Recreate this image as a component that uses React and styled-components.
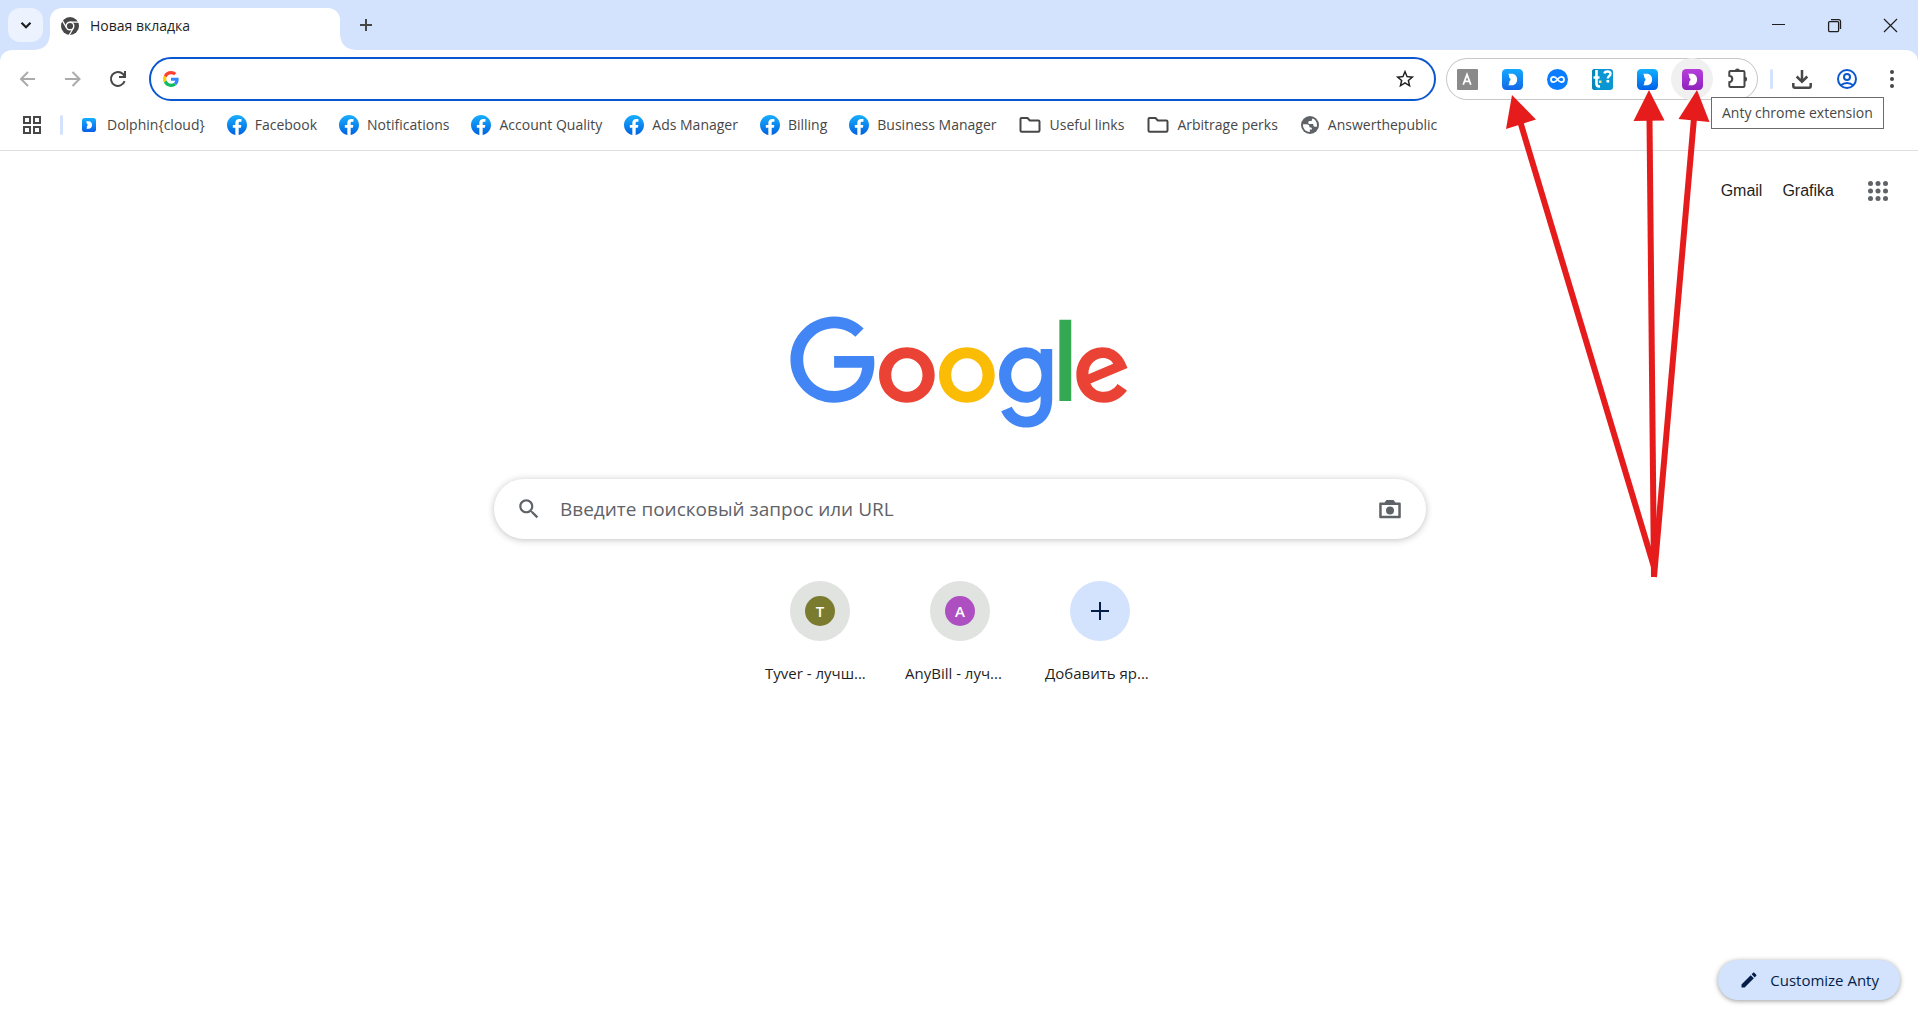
import React from "react";
import styled, { createGlobalStyle } from "styled-components";

const ui = `"Open Sans", "Noto Sans", sans-serif`;

const GlobalStyle = createGlobalStyle`
  *, *::before, *::after { box-sizing: border-box; }
  body { margin: 0; background: #fff; font-family: ${ui}; color: #1f1f1f; }
  button { border: 0; padding: 0; background: none; font: inherit; color: inherit; }
  a { color: inherit; text-decoration: none; }
  svg { display: block; flex: none; overflow: visible; }
`;

const Window = styled.div`
  position: relative;
  display: flex;
  flex-direction: column;
  min-height: 100vh;
  overflow: hidden;
`;

/* ---------- tab strip ---------- */

const TabStrip = styled.div`
  display: flex;
  height: 50px;
  padding: 8px 0 0 8px;
  background: #d3e3fd;
`;

const TabSearch = styled.button`
  display: grid;
  place-items: center;
  width: 35px;
  height: 34px;
  border-radius: 12px;
  background: #ecf2fe;
`;

const Tab = styled.div`
  position: relative;
  display: flex;
  align-items: center;
  gap: 11px;
  width: 290px;
  height: 42px;
  margin-left: 7px;
  padding: 0 11px 7px;
  border-radius: 12px 12px 0 0;
  background: #fff;
  font-size: 14px;
  line-height: 20px;

  &::before,
  &::after {
    content: "";
    position: absolute;
    bottom: 0;
    width: 14px;
    height: 14px;
  }
  &::before {
    right: 100%;
    background: radial-gradient(circle at 0 0, transparent 13px, #fff 14px);
  }
  &::after {
    left: 100%;
    background: radial-gradient(circle at 100% 0, transparent 13px, #fff 14px);
  }
`;

const NewTab = styled.button`
  display: grid;
  place-items: center;
  width: 34px;
  height: 34px;
  margin-left: 9px;
`;

const WindowControls = styled.div`
  display: flex;
  height: 34px;
  margin-left: auto;
`;

const WindowButton = styled.button`
  display: grid;
  place-items: center;
  width: 56px;
  padding-top: ${(p) => (p.$low ? "0" : "0")};
`;

/* ---------- toolbar ---------- */

const Chrome = styled.header`
  background: #d3e3fd;
`;

const Bars = styled.div`
  padding: 7px 5px 1px;
  border-bottom: 1px solid #dedfe0;
  border-radius: 12px 12px 0 0;
  background: #fff;
`;

const Toolbar = styled.div`
  display: flex;
  align-items: center;
`;

const NavButton = styled.button`
  display: grid;
  place-items: center;
  width: 45px;
  height: 42px;
  color: ${(p) => (p.$dim ? "#ababab" : "#474747")};
`;

const Omnibox = styled.label`
  display: flex;
  flex: 1;
  align-items: center;
  gap: 12px;
  min-width: 0;
  height: 44px;
  margin: 0 10px 0 9px;
  padding: 0 18px 0 12px;
  border: 2px solid #0b57d0;
  border-radius: 22px;
`;

const BareInput = styled.input`
  flex: 1;
  min-width: 0;
  padding: 0;
  border: 0;
  outline: 0;
  background: none;
  color: #1f1f1f;
  font-family: ${ui};
  font-size: ${(p) => (p.$large ? "19px" : "14px")};
  line-height: 26px;

  &::placeholder {
    color: #5f6368;
    opacity: 1;
  }
`;

const Extensions = styled.div`
  display: flex;
  gap: 3px;
  border-radius: 21px;
  box-shadow: inset 0 0 0 1px #c7c7c7;
`;

const RoundButton = styled.button`
  position: relative;
  display: grid;
  place-items: center;
  width: 42px;
  height: 42px;
  border-radius: 50%;
  background: ${(p) => (p.$hovered ? "#f0f0f0" : "none")};
  color: ${(p) => p.$color || "#474747"};
`;

const Tooltip = styled.span`
  position: absolute;
  top: 39px;
  left: 40px;
  z-index: 2;
  padding: 5px 10px;
  border: 1px solid #6b6b6b;
  background: #fff;
  color: #474747;
  font-size: 14px;
  line-height: 20px;
  white-space: nowrap;
`;

const Divider = styled.span`
  width: 3px;
  height: 20px;
  margin: ${(p) => p.$margin};
  border-radius: 2px;
  background: #d3e3fd;
`;

const ToolbarEnd = styled.div`
  display: flex;
  gap: 3px;
`;

/* ---------- bookmarks ---------- */

const Bookmarks = styled.nav`
  display: flex;
  align-items: center;
  height: 48px;
  padding-left: 17px;
`;

const BookmarkList = styled.div`
  display: flex;
  gap: 22px;
`;

const Bookmark = styled.a`
  display: flex;
  align-items: center;
  gap: 8px;
  color: #474747;
  font-size: 14px;
  line-height: 20px;
  white-space: nowrap;
`;

const BookmarkIcon = styled.span`
  display: grid;
  place-items: center;
  width: ${(p) => (p.$wide ? "23px" : "20px")};
  height: 20px;
`;

/* ---------- new tab page ---------- */

const Page = styled.main`
  display: flex;
  flex: 1;
  flex-direction: column;
  align-items: center;
  padding-left: 2px;
`;

const TopLinks = styled.nav`
  display: flex;
  align-items: center;
  align-self: stretch;
  justify-content: flex-end;
  gap: 20px;
  padding: 20px 20px 0;
  font-family: "Liberation Sans", Arial, sans-serif;
  font-size: 16px;
  line-height: 20px;
`;

const AppsButton = styled.button`
  display: grid;
  place-items: center;
  width: 40px;
  height: 40px;
  margin-left: 4px;
  color: #5f6368;
`;

const Logo = styled.svg`
  width: 340px;
  height: 115px;
  margin-top: 105px;
`;

const SearchBox = styled.label`
  display: flex;
  align-items: center;
  gap: 18px;
  width: 932px;
  max-width: calc(100% - 40px);
  height: 60px;
  margin-top: 48px;
  padding: 0 25px 0 22px;
  border-radius: 30px;
  background: #fff;
  box-shadow: 0 1px 7px rgba(32, 33, 36, 0.28);
  color: #5f6368;
`;

const Tiles = styled.div`
  display: flex;
  margin-top: 42px;
`;

const Tile = styled.a`
  display: flex;
  flex-direction: column;
  align-items: center;
  gap: 22px;
  width: 140px;
`;

const TileCircle = styled.span`
  display: grid;
  place-items: center;
  width: 60px;
  height: 60px;
  border-radius: 50%;
  background: ${(p) => (p.$add ? "#d3e3fd" : "#e1e3e1")};
`;

const Monogram = styled.span`
  display: grid;
  place-items: center;
  width: 30px;
  height: 30px;
  border-radius: 50%;
  background: ${(p) => p.$color};
  color: #fff;
  font-size: 15px;
  font-weight: 600;
  line-height: 20px;
`;

const TileLabel = styled.span`
  width: 110px;
  font-size: 15px;
  line-height: 20px;
  white-space: nowrap;
`;

const Footer = styled.footer`
  display: flex;
  justify-content: flex-end;
  padding: 0 18px 10px;
`;

const Customize = styled.button`
  display: flex;
  align-items: center;
  gap: 11px;
  height: 40px;
  padding: 0 21px;
  border-radius: 20px;
  background: #d3e3fd;
  box-shadow: 0 1px 5px rgba(0, 0, 0, 0.4);
  color: #041e49;
  font-size: 15px;
  line-height: 20px;
`;

const Annotation = styled.svg`
  position: absolute;
  top: 0;
  right: 0;
  z-index: 3;
  pointer-events: none;
`;

/* ---------- icons ---------- */

const Stroke = ({ size, width = 2, children, ...rest }) => (
  <svg width={size} height={size} viewBox={`0 0 ${size} ${size}`} fill="none" stroke="currentColor" strokeWidth={width} {...rest}>
    {children}
  </svg>
);

const Glyph = ({ size, d }) => (
  <svg width={size} height={size} viewBox="0 0 24 24" fill="currentColor">
    <path d={d} />
  </svg>
);

const STAR = "M22 9.24l-7.19-.62L12 2 9.19 8.63 2 9.24l5.46 4.73L5.82 21 12 17.27 18.18 21l-1.63-7.03L22 9.24zM12 15.4l-3.76 2.27 1-4.28-3.32-2.88 4.38-.38L12 6.1l1.71 4.04 4.38.38-3.32 2.88 1 4.28L12 15.4z";
const SEARCH = "M15.5 14h-.79l-.28-.27C15.41 12.59 16 11.11 16 9.5 16 5.91 13.09 3 9.5 3S3 5.91 3 9.5 5.91 16 9.5 16c1.61 0 3.09-.59 4.23-1.57l.27.28v.79l5 4.99L20.49 19l-4.99-5zm-6 0C7.01 14 5 11.99 5 9.5S7.01 5 9.5 5 14 7.01 14 9.5 11.99 14 9.5 14z";
const PENCIL = "M3 17.25V21h3.75L17.81 9.94l-3.75-3.75L3 17.25zM20.71 7.04c.39-.39.39-1.02 0-1.41l-2.34-2.34c-.39-.39-1.02-.39-1.41 0l-1.83 1.83 3.75 3.75 1.83-1.83z";

const ChromeIcon = () => (
  <svg width="18" height="18" viewBox="0 0 18 18">
    <circle cx="9" cy="9" r="9" fill="#474747" />
    <circle cx="9" cy="9" r="4.5" fill="#fff" />
    {[0, 120, 240].map((a) => (
      <path key={a} d="M9 5.1H18" stroke="#fff" strokeWidth="1.3" transform={`rotate(${a} 9 9)`} />
    ))}
    <circle cx="9" cy="9" r="3.1" fill="#474747" />
  </svg>
);

const GIcon = () => (
  <svg width="16" height="16" viewBox="0 0 48 48">
    <path fill="#ff4131" d="M24 9.5c3.54 0 6.71 1.22 9.21 3.6l6.85-6.85C35.9 2.38 30.47 0 24 0 14.62 0 6.51 5.38 2.56 13.22l7.98 6.19C12.43 13.72 17.74 9.5 24 9.5z" />
    <path fill="#3186ff" d="M46.98 24.55c0-1.57-.15-3.09-.38-4.55H24v9.02h12.94c-.58 2.96-2.26 5.48-4.78 7.18l7.73 6c4.51-4.18 7.09-10.36 7.09-17.65z" />
    <path fill="#ffcc00" d="M10.53 28.59c-.48-1.45-.76-2.99-.76-4.59s.27-3.14.76-4.59l-7.98-6.19C.92 16.46 0 20.12 0 24c0 3.88.92 7.54 2.56 10.78l7.97-6.19z" />
    <path fill="#0ebc5f" d="M24 48c6.48 0 11.93-2.13 15.89-5.81l-7.73-6c-2.15 1.45-4.92 2.3-8.16 2.3-6.26 0-11.57-4.22-13.47-9.91l-7.98 6.19C6.51 42.62 14.62 48 24 48z" />
  </svg>
);

const FacebookIcon = () => (
  <svg width="20" height="20" viewBox="0 0 36 36">
    <defs>
      <linearGradient id="fb" x1="0" y1="0" x2="0" y2="1">
        <stop offset="0" stopColor="#19afff" />
        <stop offset="1" stopColor="#0062e0" />
      </linearGradient>
    </defs>
    <path fill="url(#fb)" d="M15 35.8C6.5 34.3 0 26.9 0 18 0 8.1 8.1 0 18 0s18 8.1 18 18c0 8.9-6.5 16.3-15 17.8l-1-.8h-4l-1 .8z" />
    <path fill="#fff" d="M25 23l.8-5H21v-3.5c0-1.4.5-2.5 2.7-2.5H26V7.4c-1.3-.2-2.7-.4-4-.4-4.1 0-7 2.5-7 7v4h-4.5v5H15v12.7c1 .2 2 .3 3 .3s2-.1 3-.3V23h4z" />
  </svg>
);

const DolphinIcon = ({ size = 21, id, from, to }) => (
  <svg width={size} height={size} viewBox="0 0 20 20">
    <defs>
      <linearGradient id={id} x1="0" y1="0" x2="0" y2="1">
        <stop offset="0" stopColor={from} />
        <stop offset="1" stopColor={to} />
      </linearGradient>
    </defs>
    <rect width="20" height="20" rx="4" fill={`url(#${id})`} />
    <path fill="#fff" d="M5.800 4.500h3.600c3 0 5 2.300 5 5.500s-2 5.500-5 5.500H6c1-1 1.200-2.200.8-3.500.8-.4 1.300-1.200 1.300-2S7.600 8.400 6.800 8c.2-1.300-.1-2.500-1-3.500z" />
  </svg>
);

const GrayAIcon = () => (
  <svg width="21" height="21" viewBox="0 0 21 21">
    <rect width="21" height="21" rx="1" fill="#8a8a8a" />
    <path d="M6.200 15.800 10 5.500 13.800 15.800M7.600 12.300h5" fill="none" stroke="#fff" strokeWidth="1.800" />
  </svg>
);

const InfinityIcon = () => (
  <svg width="21" height="21" viewBox="0 0 20 20">
    <circle cx="10" cy="10" r="10" fill="#0a7cff" />
    <path d="M10 10C8.500 8 7.500 7.500 6.300 7.500a2.500 2.500 0 0 0 0 5C7.500 12.500 8.500 12 10 10s2.500-2.500 3.700-2.500a2.500 2.500 0 0 1 0 5C12.500 12.500 11.500 12 10 10z" fill="none" stroke="#fff" strokeWidth="1.700" />
  </svg>
);

const HelperIcon = () => (
  <svg width="21" height="21" viewBox="0 0 21 21">
    <rect width="21" height="21" rx="3" fill="#0a95d3" />
    <path d="M0 3a3 3 0 0 1 3-3h1v21H3a3 3 0 0 1-3-3z" fill="#0b86b8" />
    <path d="M4.500 1v14c0 1.700 1 2.600 3.500 2.400M1.500 8.500h6" fill="none" stroke="#fff" strokeWidth="2.600" />
    <path d="M12.500 4.500c.3-2.700 6-2.800 6 .3 0 2.300-2.700 2.200-2.700 4.700" fill="none" stroke="#fff" strokeWidth="2.400" />
    <rect x="14.500" y="11" width="2.700" height="2.500" fill="#fff" />
    <rect x="7" y="11.500" width="2.500" height="2.500" fill="#ffe28a" />
  </svg>
);

const PuzzleIcon = () => (
  <svg width="22" height="22" viewBox="0 0 22 22" fill="none" stroke="currentColor" strokeWidth="2">
    <path d="M4.500 3h12.800c.8 0 1.200.4 1.200 1.200v13.600c0 .8-.4 1.200-1.200 1.200H4.500c-.8 0-1.200-.4-1.200-1.200v-3.600c1.800-.3 3-1.500 3-3.200s-1.200-2.900-3-3.200V4.200C3.300 3.400 3.700 3 4.500 3z" />
    <path d="M8.800 3a2.600 2.600 0 0 1 5.200 0zM18.500 8.400a2.600 2.600 0 0 1 0 5.200z" fill="currentColor" stroke="none" />
  </svg>
);

const DownloadIcon = () => (
  <Stroke size={20} width={2.5}>
    <path d="M10 1v11M4.700 7.500 10 12.800l5.300-5.300M1.300 14v3c0 1 .6 1.700 1.700 1.700h14c1.100 0 1.700-.7 1.700-1.700v-3" />
  </Stroke>
);

const AccountIcon = () => (
  <Stroke size={20}>
    <circle cx="10" cy="10" r="9" />
    <circle cx="10" cy="8" r="3" />
    <path d="M4 16.200c3.300-3 8.700-3 12 0" />
  </Stroke>
);

const FolderIcon = () => (
  <Stroke size={20}>
    <path d="M1.500 3h6l2.300 2.500h8.500c.7 0 1.200.4 1.200 1.100v9c0 .8-.5 1.200-1.200 1.200H1.700C1 16.800.5 16.400.5 15.600V4.100C.5 3.400.9 3 1.500 3z" />
  </Stroke>
);

const GlobeIcon = () => (
  <svg width="18" height="18" viewBox="0 0 18 18">
    <circle cx="9" cy="9" r="9" fill="#5f6368" />
    <path fill="#fff" d="M2 8.200h3.500c1.900 0 2.900.9 2.900 2.300 0 .7.500 1 1.200 1 .9 0 1.300.5 1.300 1.300v.7H8.800v2.400C5 16 2 12.900 2 9z" />
    <path fill="#fff" d="M11.800 2.600C14.300 3.600 16 6.100 16 9c0 .6-.1 1.200-.2 1.700h-1.900c-1 0-1.600-.6-1.600-1.600V8H8.800c-1 0-1.600-.6-1.600-1.500S7.800 5 8.800 5h1.100c.7 0 1-.4 1-1 0-.7.300-1.100.900-1.400z" />
  </svg>
);

const CameraIcon = () => (
  <svg width="22" height="20" viewBox="0 0 22 20" fill="#5f6368">
    <path fillRule="evenodd" d="M7.500 1h7l2 2.500h4c.8 0 1.300.5 1.300 1.300V18c0 .8-.5 1.300-1.300 1.300h-19C.7 19.300.2 18.800.2 18V4.800c0-.8.5-1.300 1.300-1.300h4zM2.700 6v10.800h16.600V6z" />
    <circle cx="11" cy="11.500" r="4" />
  </svg>
);

const bookmarks = [
  { label: "Dolphin{cloud}", icon: <DolphinIcon size={14} id="dc" from="#12b0ff" to="#0a5fea" /> },
  { label: "Facebook", icon: <FacebookIcon /> },
  { label: "Notifications", icon: <FacebookIcon /> },
  { label: "Account Quality", icon: <FacebookIcon /> },
  { label: "Ads Manager", icon: <FacebookIcon /> },
  { label: "Billing", icon: <FacebookIcon /> },
  { label: "Business Manager", icon: <FacebookIcon /> },
  { label: "Useful links", icon: <FolderIcon />, wide: true },
  { label: "Arbitrage perks", icon: <FolderIcon />, wide: true },
  { label: "Answerthepublic", icon: <GlobeIcon /> },
];

const arrows = [
  { head: "1512,95 1536,119.5 1506,129", line: [1520, 121, 1654, 567] },
  { head: "1649,90 1664.500,120.500 1633.500,121", line: [1649.5, 119, 1654, 577] },
  { head: "1697,90 1709.500,122 1678.500,119", line: [1694, 118, 1654, 577] },
];

export default function App() {
  return (
    <Window>
      <GlobalStyle />
      <Chrome>
        <TabStrip>
          <TabSearch aria-label="Search tabs">
            <Stroke size={12} width={2.2}>
              <path d="M1.500 3.800 6 8.300l4.500-4.500" />
            </Stroke>
          </TabSearch>
          <Tab>
            <ChromeIcon />
            Новая вкладка
          </Tab>
          <NewTab aria-label="New tab">
            <Stroke size={14} color="#474747">
              <path d="M7 1v12M1 7h12" />
            </Stroke>
          </NewTab>
          <WindowControls>
            <WindowButton aria-label="Minimize">
              <Stroke size={13} width={1}>
                <path d="M0 5.500h13" />
              </Stroke>
            </WindowButton>
            <WindowButton aria-label="Restore">
              <Stroke size={13} width={1.3}>
                <rect x=".6" y="2.600" width="10" height="10" rx="1" />
                <path d="M3 .6h7.500c1.200 0 2 .8 2 2V10" />
              </Stroke>
            </WindowButton>
            <WindowButton aria-label="Close">
              <Stroke size={13} width={1.2}>
                <path d="M0 0l13 13M13 0 0 13" />
              </Stroke>
            </WindowButton>
          </WindowControls>
        </TabStrip>

        <Bars>
          <Toolbar>
            <NavButton $dim aria-label="Back">
              <Stroke size={16}>
                <path d="M15 8H1.500M8 1 1 8l7 7" />
              </Stroke>
            </NavButton>
            <NavButton $dim aria-label="Forward">
              <Stroke size={16}>
                <path d="M0 8h14M7.500 1l7 7-7 7" />
              </Stroke>
            </NavButton>
            <NavButton aria-label="Reload">
              <Stroke size={16}>
                <path d="M14.600 10.200A7 7 0 1 1 13 3l1.500 2.300M15 0v6H9" />
              </Stroke>
            </NavButton>
            <Omnibox>
              <GIcon />
              <BareInput aria-label="Address bar" />
              <Glyph size={22} d={STAR} />
            </Omnibox>
            <Extensions>
              <RoundButton aria-label="Extension A"><GrayAIcon /></RoundButton>
              <RoundButton aria-label="Dolphin"><DolphinIcon id="d1" from="#12a8ff" to="#1468e6" /></RoundButton>
              <RoundButton aria-label="Infinity"><InfinityIcon /></RoundButton>
              <RoundButton aria-label="Helper"><HelperIcon /></RoundButton>
              <RoundButton aria-label="Dolphin"><DolphinIcon id="d2" from="#12b0ff" to="#0060e8" /></RoundButton>
              <RoundButton $hovered aria-label="Anty chrome extension">
                <DolphinIcon id="d3" from="#b73fdc" to="#8f22bd" />
                <Tooltip>Anty chrome extension</Tooltip>
              </RoundButton>
              <RoundButton aria-label="Extensions"><PuzzleIcon /></RoundButton>
            </Extensions>
            <Divider $margin="0 8px 0 12px" />
            <ToolbarEnd>
              <RoundButton aria-label="Downloads"><DownloadIcon /></RoundButton>
              <RoundButton $color="#0b57d0" aria-label="Profile"><AccountIcon /></RoundButton>
              <RoundButton aria-label="Menu">
                <svg width="4" height="18" viewBox="0 0 4 18" fill="currentColor">
                  {[2, 9, 16].map((y) => <circle key={y} cx="2" cy={y} r="2" />)}
                </svg>
              </RoundButton>
            </ToolbarEnd>
          </Toolbar>

          <Bookmarks>
            <button aria-label="All apps">
              <Stroke size={20}>
                {[[2, 2], [12, 2], [2, 12], [12, 12]].map(([x, y]) => (
                  <rect key={`${x}${y}`} x={x} y={y} width="6" height="6" stroke="#474747" />
                ))}
              </Stroke>
            </button>
            <Divider $margin="0 16px 0 18px" />
            <BookmarkList>
              {bookmarks.map((b) => (
                <Bookmark href="#" key={b.label}>
                  <BookmarkIcon $wide={b.wide}>{b.icon}</BookmarkIcon>
                  {b.label}
                </Bookmark>
              ))}
            </BookmarkList>
          </Bookmarks>
        </Bars>
      </Chrome>

      <Page>
        <TopLinks>
          <a href="#">Gmail</a>
          <a href="#">Grafika</a>
          <AppsButton aria-label="Google apps">
            <svg width="20" height="20" viewBox="0 0 20 20" fill="currentColor">
              {[2.5, 10, 17.5].map((y) => [2.5, 10, 17.5].map((x) => <circle key={`${x}-${y}`} cx={x} cy={y} r="2.500" />))}
            </svg>
          </AppsButton>
        </TopLinks>

        <Logo viewBox="0 0 272 92" role="img" aria-label="Google">
          <path fill="#EA4335" d="M115.75 47.18c0 12.77-9.99 22.18-22.25 22.18s-22.25-9.41-22.25-22.18C71.25 34.32 81.24 25 93.5 25s22.25 9.32 22.25 22.18zm-9.74 0c0-7.98-5.79-13.44-12.51-13.44S80.99 39.2 80.99 47.18c0 7.9 5.79 13.44 12.51 13.44s12.51-5.55 12.51-13.44z" />
          <path fill="#FBBC05" d="M163.75 47.18c0 12.77-9.99 22.18-22.25 22.18s-22.25-9.41-22.25-22.18c0-12.85 9.99-22.18 22.25-22.18s22.25 9.32 22.25 22.18zm-9.74 0c0-7.98-5.79-13.44-12.51-13.44s-12.51 5.46-12.51 13.44c0 7.9 5.79 13.44 12.51 13.44s12.51-5.55 12.51-13.44z" />
          <path fill="#4285F4" d="M209.75 26.34v39.82c0 16.38-9.66 23.07-21.08 23.07-10.75 0-17.22-7.19-19.66-13.07l8.48-3.53c1.51 3.61 5.21 7.87 11.17 7.87 7.31 0 11.84-4.51 11.84-13v-3.19h-.34c-2.18 2.69-6.38 5.04-11.68 5.04-11.09 0-21.25-9.66-21.25-22.09 0-12.52 10.16-22.26 21.25-22.26 5.29 0 9.49 2.35 11.68 4.96h.34v-3.61h9.25zm-8.56 20.92c0-7.81-5.21-13.52-11.84-13.52-6.72 0-12.35 5.71-12.35 13.52 0 7.73 5.63 13.36 12.35 13.36 6.63 0 11.84-5.63 11.84-13.36z" />
          <path fill="#34A853" d="M225 3v65h-9.5V3h9.5z" />
          <path fill="#EA4335" d="M262.02 54.48l7.56 5.04c-2.44 3.61-8.32 9.83-18.48 9.83-12.6 0-22.01-9.74-22.01-22.18 0-13.19 9.49-22.18 20.92-22.18 11.51 0 17.14 9.16 18.98 14.11l1.01 2.52-29.65 12.28c2.27 4.45 5.8 6.72 10.75 6.72 4.96 0 8.4-2.44 10.92-6.14zm-23.27-7.98l19.82-8.23c-1.09-2.77-4.37-4.7-8.23-4.7-4.95 0-11.84 4.37-11.59 12.93z" />
          <path fill="#4285F4" d="M35.29 41.41V32H67c.31 1.64.47 3.58.47 5.68 0 7.06-1.93 15.79-8.15 22.01-6.05 6.3-13.78 9.66-24.02 9.66C16.32 69.35.36 53.89.36 34.91.36 15.93 16.32.47 35.3.47c10.5 0 17.98 4.12 23.6 9.49l-6.64 6.64c-4.03-3.78-9.49-6.72-16.97-6.72-13.86 0-24.7 11.17-24.7 25.03 0 13.86 10.84 25.03 24.7 25.03 8.99 0 14.11-3.61 17.39-6.89 2.66-2.66 4.41-6.46 5.1-11.65l-22.49.01z" />
        </Logo>

        <SearchBox>
          <Glyph size={26} d={SEARCH} />
          <BareInput $large placeholder="Введите поисковый запрос или URL" aria-label="Введите поисковый запрос или URL" />
          <CameraIcon />
        </SearchBox>

        <Tiles>
          <Tile href="#">
            <TileCircle><Monogram $color="#7b7b2f">T</Monogram></TileCircle>
            <TileLabel>Tyver - лучш...</TileLabel>
          </Tile>
          <Tile href="#">
            <TileCircle><Monogram $color="#ae4fc1">A</Monogram></TileCircle>
            <TileLabel>AnyBill - луч...</TileLabel>
          </Tile>
          <Tile href="#">
            <TileCircle $add>
              <Stroke size={18} color="#041e49">
                <path d="M9 0v18M0 9h18" />
              </Stroke>
            </TileCircle>
            <TileLabel>Добавить яр...</TileLabel>
          </Tile>
        </Tiles>
      </Page>

      <Footer>
        <Customize>
          <Glyph size={20} d={PENCIL} />
          Customize Anty
        </Customize>
      </Footer>

      <Annotation width="440" height="600" viewBox="1478 0 440 600" aria-hidden="true">
        {arrows.map(({ head, line: [x1, y1, x2, y2] }) => (
          <g key={head} fill="#e61c1c" stroke="#e61c1c">
            <polygon points={head} stroke="none" />
            <line x1={x1} y1={y1} x2={x2} y2={y2} strokeWidth="6" />
          </g>
        ))}
      </Annotation>
    </Window>
  );
}
